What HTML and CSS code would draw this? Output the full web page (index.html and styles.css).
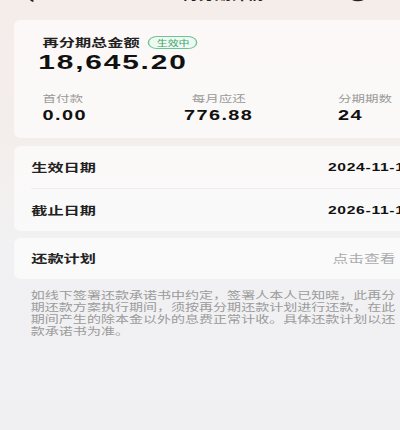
FILE: index.html
```html
<!DOCTYPE html>
<html lang="zh-CN">
<head>
<meta charset="utf-8">
<title>再分期详情</title>
<link rel="stylesheet" href="styles.css">
</head>
<body>
<div class="page">
  <header class="nav">
    <span class="nav-back"><svg width="8" height="14" viewBox="0 0 8 14"><path d="M7 1 L1.5 7 L7 13" fill="none" stroke="#222" stroke-width="1.6" stroke-linecap="round" stroke-linejoin="round"/></svg></span>
    <h1 class="nav-title">再分期详情</h1>
    <span class="nav-actions">
      <svg width="16" height="16" viewBox="0 0 16 16"><circle cx="8" cy="8" r="6.5" fill="none" stroke="#222" stroke-width="1.6"/></svg>
      <svg width="16" height="16" viewBox="0 0 16 16"><circle cx="3" cy="8" r="1.4" fill="#222"/><circle cx="8" cy="8" r="1.4" fill="#222"/><circle cx="13" cy="8" r="1.4" fill="#222"/></svg>
    </span>
  </header>

  <section class="card summary">
    <div class="sum-head">
      <span class="sum-title">再分期总金额</span>
      <span class="badge">生效中</span>
    </div>
    <div class="sum-amount">18,645.20</div>
    <div class="stats">
      <div class="stat">
        <span class="stat-label">首付款</span>
        <span class="stat-value">0.00</span>
      </div>
      <div class="stat stat-mid">
        <span class="stat-label">每月应还</span>
        <span class="stat-value">776.88</span>
      </div>
      <div class="stat stat-right">
        <span class="stat-label">分期期数</span>
        <span class="stat-value">24</span>
      </div>
    </div>
  </section>

  <section class="card list">
    <div class="row row-divider">
      <span class="row-label">生效日期</span>
      <span class="row-value">2024-11-15</span>
    </div>
    <div class="row">
      <span class="row-label">截止日期</span>
      <span class="row-value">2026-11-15</span>
    </div>
  </section>

  <section class="card list list-single">
    <div class="row row-short">
      <span class="row-label">还款计划</span>
      <span class="row-link">点击查看<svg width="6" height="10" viewBox="0 0 6 10"><path d="M1 1 L5 5 L1 9" fill="none" stroke="#b0b0b0" stroke-width="1.2"/></svg></span>
    </div>
  </section>

  <p class="notice">如线下签署还款承诺书中约定，签署人本人已知晓，此再分期还款方案执行期间，须按再分期还款计划进行还款，在此期间产生的除本金以外的息费正常计收。具体还款计划以还款承诺书为准。</p>
</div>
</body>
</html>
```

FILE: styles.css
```css
* {
  box-sizing: border-box;
  margin: 0;
  padding: 0;
}

html,
body {
  width: 400px;
  height: 430px;
  overflow: hidden;
}

body {
  font-family: "Noto Sans CJK SC", "Noto Sans", sans-serif;
  background: linear-gradient(180deg, #f5ede9 0, #f4eeeb 135px, #f1f1f3 250px, #f0f0f2 100%);
  color: #222;
}

.page {
  width: 308px;
  padding: 0 10px;
  transform: scaleX(1.42);
  transform-origin: 0 0;
}

/* top bar (mostly scrolled out of view) */
.nav {
  height: 40px;
  margin-top: -38.5px;
  display: grid;
  grid-template-columns: 1fr auto 1fr;
  align-items: end;
  padding-left: 6px;
}

.nav-back svg,
.nav-actions svg {
  display: block;
}

.nav-title {
  font-size: 11.5px;
  font-weight: 700;
  line-height: 14px;
  color: #222;
}

.nav-actions {
  justify-self: end;
  display: flex;
  gap: 14px;
  padding-right: 8px;
}

/* cards */
.card {
  background: rgba(255, 255, 255, 0.62);
  border-radius: 5px;
}

.summary {
  margin-top: 18.5px;
  padding: 15px 20px 15.5px;
}

.sum-head {
  display: flex;
  align-items: center;
  gap: 6px;
  height: 14px;
}

.sum-title {
  font-size: 11.4px;
  font-weight: 700;
  line-height: 14px;
  color: #222;
}

.badge {
  font-size: 7.7px;
  line-height: 11px;
  padding: 0 5px;
  border: 1px solid #6cc495;
  border-radius: 7px;
  color: #3ba56a;
  background: #eef9f2;
}

.sum-amount {
  margin-top: 1px;
  margin-left: -3px;
  font-family: "Liberation Sans", Arial, sans-serif;
  font-weight: 700;
  font-size: 21px;
  line-height: 24px;
  letter-spacing: 1.3px;
  color: #111;
}

.stats {
  margin-top: 17.5px;
  display: grid;
  grid-template-columns: 1fr auto 1fr;
}

.stat {
  display: flex;
  flex-direction: column;
  align-items: flex-start;
  gap: 3px;
}

.stat-mid {
  align-items: center;
}

.stat-right {
  justify-self: end;
  padding-right: 2px;
}

.stat-label {
  font-size: 9.5px;
  line-height: 12px;
  color: #9a9a9a;
}

.stat-value {
  font-family: "Liberation Sans", Arial, sans-serif;
  font-weight: 700;
  font-size: 14px;
  line-height: 16px;
  letter-spacing: 1px;
  color: #111;
}

/* list cards */
.list {
  margin-top: 7.5px;
  padding: 0 6.4px 0 12px;
}

.list-single {
  margin-top: 7px;
}

.row {
  display: flex;
  justify-content: space-between;
  align-items: center;
  height: 42px;
}

.row-divider {
  height: 43px;
  border-bottom: 1px solid #ececec;
}

.row-short {
  height: 41px;
}

.row-label {
  font-size: 11.4px;
  font-weight: 700;
  color: #222;
}

.row-value {
  font-family: "Liberation Sans", Arial, sans-serif;
  font-weight: 700;
  font-size: 11px;
  letter-spacing: 0.5px;
  color: #111;
}

.row-link {
  display: flex;
  align-items: center;
  gap: 7px;
  font-size: 11.1px;
  color: #ababab;
}

.notice {
  margin-top: 10px;
  padding: 0 11.7px;
  font-size: 9.9px;
  line-height: 12px;
  color: #9b9b9b;
}
```
